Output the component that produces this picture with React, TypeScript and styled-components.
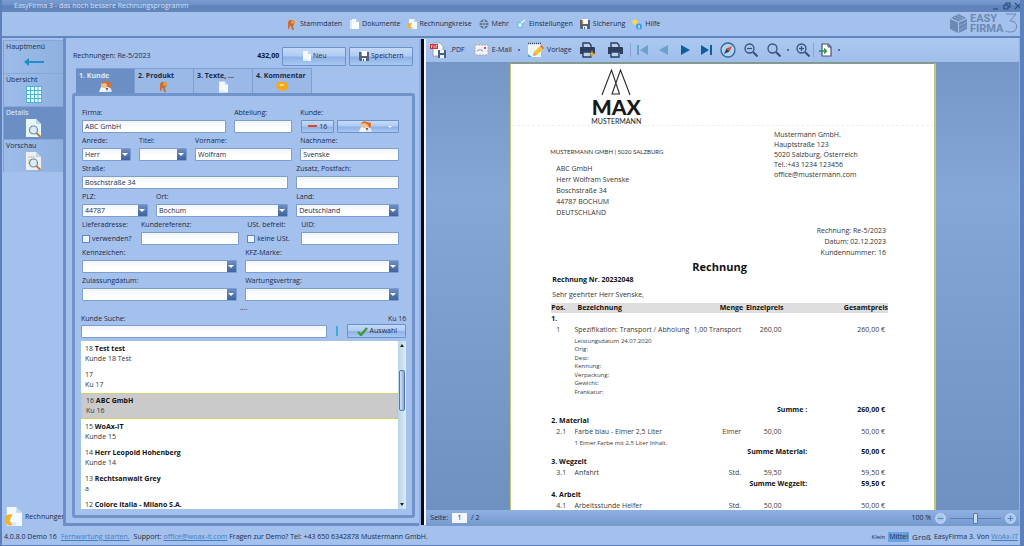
import React from "react";
import styled, { createGlobalStyle } from "styled-components";

const Global = createGlobalStyle`
  * { box-sizing: border-box; }
  html, body { margin: 0; padding: 0; }
  body, button, input, select {
    font-family: "Open Sans", "Noto Sans", sans-serif;
    font-size: 7px;
    line-height: 10px;
    color: #1b2a4a;
  }
  button { padding: 0; margin: 0; border: 0; background: none; cursor: pointer; }
  ul { list-style: none; margin: 0; padding: 0; }
  p, h1, h2 { margin: 0; }
  svg { display: block; flex: none; }
  a { color: #3f7fc4; }
`;

const Window = styled.div`
  display: flex;
  flex-direction: column;
  width: 100%;
  height: 100vh;
  min-height: 320px;
  overflow: hidden;
  background: #a3c1ec;
  border: solid #5b80ba;
  border-width: 0 4px 1px 2px;
`;

const TitleBar = styled.header`
  display: flex;
  align-items: center;
  justify-content: space-between;
  flex: none;
  height: 12px;
  padding: 0 2px 1px 14px;
  margin: 0 -4px 0 -2px;
  background: linear-gradient(#789cd2, #6f93ca 35%, #5f82b8 50%, #6285bc);
  color: #d3e2f8;
`;

const WindowButtons = styled.div`
  display: flex;
  gap: 3px;
`;

const MenuBar = styled.nav`
  display: flex;
  align-items: center;
  flex: none;
  height: 26px;
  padding: 0 2px 0 28%;
  border-bottom: 2px solid #6185bd;
`;

const MenuItem = styled.button`
  display: flex;
  align-items: center;
  gap: 3px;
  margin-right: 7px;
`;

const Brand = styled.div`
  margin-left: auto;
`;

const Body = styled.div`
  display: flex;
  flex: 1;
  min-height: 0;
`;

const SideNav = styled.aside`
  display: flex;
  flex-direction: column;
  flex: none;
  width: 61px;
  padding: 2px 0 0 1px;
`;

const SideTab = styled.button<{ $active?: boolean }>`
  display: flex;
  flex-direction: column;
  align-items: flex-start;
  height: 33px;
  padding: 1px 2px 0;
  border: 1px solid #7d9fd2;
  border-top-color: #86a7d8;
  border-width: 1px 0 0 1px;
  background: ${(p) => (p.$active ? "#6b8fc5" : "linear-gradient(90deg, #9dbce9, #8fb0e0)")};
  color: ${(p) => (p.$active ? "#e8f1ff" : "#1b2a4a")};
  & > svg { align-self: center; margin-top: 1px; }
`;

const SideFoot = styled.div`
  display: flex;
  align-items: center;
  gap: 3px;
  margin-top: auto;
  padding-left: 2px;
  white-space: nowrap;
  overflow: hidden;
`;

const Editor = styled.main`
  display: flex;
  flex-direction: column;
  flex: 0 0 35%;
  min-width: 0;
  padding: 6px 4px 5px 6px;
  border: solid #6a8ec5;
  border-width: 0 0 3px 3px;
`;

const EditorHead = styled.div`
  display: flex;
  align-items: center;
  flex: none;
  gap: 3px;
  height: 24px;
  padding: 0 2px 0 1px;
`;

const HeadTitle = styled.h1`
  flex: 1;
  font-size: 7px;
  font-weight: 400;
`;

const Amount = styled.strong`
  color: #0d1526;
`;

const PushButton = styled.button<{ $w: number; $h: number }>`
  display: flex;
  align-items: center;
  justify-content: center;
  gap: 2px;
  flex: 0 1 ${(p) => p.$w}px;
  height: ${(p) => p.$h}px;
  border: 1px solid #6c90cb;
  border-radius: 1px;
  background: linear-gradient(#c3d9f8, #b0ccf3 48%, #8db0e6 52%, #a9c7f2);
`;

const Tabs = styled.div`
  display: flex;
  flex: none;
  padding: 0 0 0 4px;
`;

const Tab = styled.button<{ $active?: boolean }>`
  display: flex;
  flex-direction: column;
  align-items: flex-start;
  width: 59px;
  height: 25px;
  padding: 2px 3px 0;
  border: 1px solid #7d9fd3;
  border-width: 1px 1px 0 0;
  font-weight: 700;
  background: ${(p) => (p.$active ? "#6b8fc5" : "#9ab9e7")};
  color: ${(p) => (p.$active ? "#dce9fb" : "#1b2a4a")};
  & > svg { align-self: center; }
`;

const Group = styled.section`
  display: flex;
  flex-direction: column;
  flex: 1;
  min-height: 0;
  padding: 12px 6px 6px;
  border: 3px solid #7094ca;
  border-radius: 3px;
`;

const Form = styled.form`
  display: flex;
  flex-direction: column;
  gap: 3px;
  padding: 0 7px 0 1px;
`;

const FormRow = styled.div<{ $cols: string }>`
  display: grid;
  grid-template-columns: ${(p) => p.$cols};
  column-gap: 8px;
`;

const FieldBox = styled.div`
  display: flex;
  flex-direction: column;
  gap: 2px;
  min-width: 0;
  white-space: nowrap;
`;

const TextInput = styled.input`
  width: 100%;
  min-width: 0;
  height: 13px;
  padding: 0 2px;
  border: 1px solid #7c9dd0;
  border-radius: 1px;
  outline: 0;
  background: linear-gradient(#f1f5fc, #fff 60%);
`;

const SearchInput = styled(TextInput)`
  flex: 1;
  width: auto;
`;

const SelectWrap = styled.span`
  position: relative;
  display: block;
  &::before {
    content: "";
    position: absolute;
    top: 1px;
    right: 1px;
    width: 9px;
    height: 11px;
    background: linear-gradient(#6b8dc4, #3f639f);
    pointer-events: none;
  }
  &::after {
    content: "";
    position: absolute;
    top: 5px;
    right: 3px;
    border: solid transparent;
    border-width: 3px 3px 0;
    border-top-color: #fff;
    pointer-events: none;
  }
`;

const SelectInput = styled.select`
  display: block;
  width: 100%;
  height: 13px;
  padding: 0 12px 0 2px;
  appearance: none;
  border: 1px solid #7c9dd0;
  border-radius: 1px;
  outline: 0;
  background: linear-gradient(#f1f5fc, #fff 60%);
`;

const CheckLabel = styled.label`
  display: flex;
  align-items: center;
  gap: 2px;
  height: 13px;
`;

const CheckBox = styled.input`
  appearance: none;
  flex: none;
  width: 8px;
  height: 8px;
  margin: 0;
  border: 1px solid #6286bf;
  background: #eef4fd;
`;

const ButtonPair = styled.div`
  display: flex;
  gap: 3px;
  padding-left: 1px;
`;

const DropMark = styled.i`
  margin-left: 14px;
  margin-right: -14px;
  border: solid transparent;
  border-width: 2px 2px 0;
  border-top-color: #e8f1ff;
`;

const Splitter = styled.div`
  flex: none;
  height: 13px;
  line-height: 14px;
  text-align: center;
`;

const SearchHead = styled.div`
  display: flex;
  justify-content: space-between;
`;

const SearchRow = styled.div`
  display: flex;
  align-items: center;
  flex: none;
  gap: 9px;
  height: 14px;
  margin-bottom: 3px;
`;

const SearchTick = styled.i`
  flex: none;
  width: 2px;
  height: 10px;
  background: #3fa9dc;
`;

const ListBox = styled.div`
  display: flex;
  flex: 1;
  min-height: 0;
  background: #fff;
`;

const List = styled.ul`
  flex: 1;
  overflow: hidden;
`;

const ListItem = styled.li<{ $active?: boolean }>`
  height: 26px;
  padding: ${(p) => (p.$active ? "2px 4px" : "3px 4px")};
  border: ${(p) => (p.$active ? "1px solid #d3cf6a" : "0")};
  background: ${(p) => (p.$active ? "#cbcaca" : "#fff")};
  color: #333;
  b { color: #111; }
`;

const ScrollBar = styled.div`
  display: flex;
  flex-direction: column;
  align-items: center;
  justify-content: space-between;
  flex: none;
  width: 8px;
  padding: 3px 0;
  background: linear-gradient(90deg, #b7d4ea, #dcebf5);
`;

const ScrollThumb = styled.span`
  width: 6px;
  height: 41px;
  margin: 23px 0 auto;
  border: 1px solid #5577aa;
  border-radius: 2px;
  background: linear-gradient(90deg, #d4e4f8, #88a9d8);
`;

const Divider = styled.div`
  flex: none;
  width: 7px;
  margin: 1px 0;
  background: linear-gradient(90deg, #8fb0e0 0 2px, #05080f 2px 5px, #f2f6fc 5px);
`;

const Viewer = styled.section`
  display: flex;
  flex-direction: column;
  flex: 1;
  min-width: 0;
  border-right: 1px solid #8fb1e3;
`;

const ToolBar = styled.div`
  display: flex;
  align-items: center;
  flex: none;
  height: 24px;
  background: linear-gradient(#abc8f0, #a0beea);
`;

const Tool = styled.button<{ $w: number }>`
  display: flex;
  align-items: center;
  justify-content: center;
  gap: 3px;
  flex: none;
  width: ${(p) => p.$w}px;
  height: 22px;
`;

const Dot = styled.i`
  width: 2px;
  height: 2px;
  margin-left: 3px;
  background: #52709f;
`;

const ToolSep = styled.span`
  flex: none;
  width: 1px;
  height: 14px;
  margin: 0 1px;
  background: #86a5d4;
`;

const Canvas = styled.div`
  display: flex;
  flex: 1;
  min-height: 0;
  padding: 1px 83px 0 84px;
  overflow: hidden;
  background: linear-gradient(#7596c6, #85a7d7 30%, #7b9dcd 60%, #6e91c1);
`;

const Paper = styled.article`
  flex: 1;
  min-width: 0;
  padding: 5px 46px 0 40px;
  border: 1px solid #c2cb74;
  border-top-color: #8fa05c;
  border-right-width: 2px;
  border-bottom: 0;
  background: #fff;
  color: #333;
`;

const PaperLogo = styled.div`
  display: flex;
  flex-direction: column;
  align-items: center;
  width: 130px;
`;

const LogoName = styled.strong`
  font-family: Lato, sans-serif;
  font-size: 21px;
  font-weight: 900;
  line-height: 21px;
  color: #1a1a1a;
`;

const LogoSub = styled.span`
  font-family: Lato, sans-serif;
  font-size: 7px;
  line-height: 8px;
  color: #222;
`;

const Fold = styled.hr`
  margin: 0 -46px 4px -39px;
  border: 0;
  border-top: 1px dashed #eceeef;
`;

const Addresses = styled.div`
  display: flex;
  justify-content: space-between;
`;

const Recipient = styled.address`
  padding: 33px 0 0 5px;
  font-style: normal;
  line-height: 11px;
  white-space: pre-line;
`;

const Sender = styled.address`
  width: 114px;
  font-style: normal;
  line-height: 10px;
  white-space: pre-line;
`;

const SenderLine = styled.p`
  margin: -17px 0 6px -6px;
  font-family: Lato, sans-serif;
  font-size: 6px;
`;

const Meta = styled.div`
  margin-top: 7px;
  padding-right: 2px;
  text-align: right;
  line-height: 11px;
`;

const DocTitle = styled.h2`
  margin-top: 1px;
  font-size: 11px;
  line-height: 16px;
  text-align: center;
  color: #111;
`;

const DocNumber = styled.p`
  padding-left: 1px;
  font-weight: 700;
  color: #111;
`;

const Greeting = styled.p`
  padding: 5px 0 3px 1px;
`;

const Items = styled.table`
  width: 100%;
  border-collapse: collapse;
  table-layout: fixed;
  td, th { padding: 0; text-align: left; vertical-align: middle; white-space: nowrap; }
  th { background: #dedede; color: #111; }
`;

const ItemRow = styled.tr<{ $h: number; $small?: boolean; $bold?: boolean }>`
  height: ${(p) => p.$h}px;
  font-size: ${(p) => (p.$small ? 6 : 7)}px;
  line-height: ${(p) => (p.$small ? 8 : 10)}px;
  font-weight: ${(p) => (p.$bold ? 700 : 400)};
  color: ${(p) => (p.$bold ? "#111" : "#3a3a3a")};
`;

const Cell = styled.td<{ $end?: number; $start?: number }>`
  && {
    text-align: ${(p) => (p.$end === undefined ? "left" : "right")};
    padding-right: ${(p) => p.$end ?? 0}px;
    padding-left: ${(p) => p.$start ?? 0}px;
  }
`;

const HeadCell = styled(Cell).attrs({ as: "th" })``;

const PageBar = styled.footer`
  display: flex;
  align-items: center;
  flex: none;
  gap: 4px;
  height: 16px;
  padding: 0 3px 0 4px;
  background: linear-gradient(#8fb0e3, #7598cd);
`;

const PageInput = styled.input`
  width: 15px;
  height: 10px;
  padding: 0;
  border: 0;
  text-align: center;
  background: #f4f8fe;
`;

const ZoomText = styled.span`
  margin-left: auto;
`;

const ZoomSlider = styled.input`
  appearance: none;
  width: 51px;
  height: 12px;
  margin: 0;
  background: linear-gradient(#5c7fb6, #5c7fb6) center / 100% 1px no-repeat;
  &::-webkit-slider-thumb {
    appearance: none;
    width: 5px;
    height: 11px;
    border: 1px solid #56779f;
    border-radius: 1px;
    background: #c9dcf6;
  }
`;

const StatusBar = styled.footer`
  display: flex;
  align-items: center;
  flex: none;
  gap: 4px;
  height: 19px;
  padding: 3px 2px 0;
  white-space: nowrap;
`;

const SizeButton = styled.button<{ $size: number; $active?: boolean }>`
  font-size: ${(p) => p.$size}px;
  padding: 0 1px;
  background: ${(p) => (p.$active ? "#69a3e0" : "none")};
`;

const StatusRight = styled.div`
  display: flex;
  align-items: center;
  gap: 2px;
  margin-left: auto;
`;

/* ---------- icons ---------- */

const PersonIcon = () => (
  <svg width="10" height="11" viewBox="0 0 10 11">
    <path d="M2 1h5l1 3-2 3 1 4H5L4 7 2 6z" fill="#b8732c" />
    <path d="M1 3l2-2 1 4-2 5H1z" fill="#d9652f" />
    <circle cx="6" cy="3" r="2" fill="#e0a040" />
  </svg>
);
const UsersIcon = () => (
  <svg width="13" height="11" viewBox="0 0 13 11">
    <path d="M0 11l2-5h4l2 5z" fill="#f4f8fc" />
    <path d="M6 11l1-5h4l2 4-1 1z" fill="#dfeaf4" />
    <circle cx="5" cy="4" r="3" fill="#f3c08c" />
    <path d="M2 3q2-4 6-2l4 1v4l-2 1-1-3-3-2z" fill="#e46a1e" />
    <path d="M7 7l1 3 1-3z" fill="#6a3a2c" />
  </svg>
);
const DocIcon = ({ w = 9, h = 10, coin = false }: { w?: number; h?: number; coin?: boolean }) => (
  <svg width={w} height={h} viewBox="0 0 9 10">
    <path d="M1 0h5l3 3v7H1z" fill="#f3f9ff" />
    <path d="M6 0l3 3H6z" fill="#b9d8f0" />
    <path d="M1 8h5v2H1z" fill="#d9ecfa" />
    {coin && <path d="M4 4a3 3 0 1 0 0 5.500L2.500 7z" fill="#f0b323" />}
  </svg>
);
const PagesIcon = () => (
  <svg width="10" height="11" viewBox="0 0 10 11">
    <path d="M1 1h4l2 2v7H1z" fill="#dcebfa" />
    <path d="M3 0h4l3 3v7H3z" fill="#f8fcff" />
    <path d="M7 0l3 3H7z" fill="#a9cdec" />
  </svg>
);
const GlobeIcon = () => (
  <svg width="10" height="10" viewBox="0 0 10 10">
    <circle cx="5" cy="5" r="4.500" fill="#5a7a9a" />
    <path d="M1 3.500h8M1 6.500h8M5 1q-3 4 0 8M5 1q3 4 0 8" stroke="#b4cce0" strokeWidth=".7" fill="none" />
  </svg>
);
const GearIcon = () => (
  <svg width="10" height="10" viewBox="0 0 10 10">
    <circle cx="4" cy="6" r="3" fill="#a9dcf5" stroke="#6ab8e6" />
    <circle cx="4" cy="6" r="1" fill="#fff" />
    <path d="M5 4l4-3" stroke="#e8f5fd" strokeWidth="1.500" />
  </svg>
);
const FloppyIcon = () => (
  <svg width="10" height="10" viewBox="0 0 10 10">
    <path d="M0 1h10v9H1L0 9z" fill="#56617a" />
    <path d="M2 0h6v5H2z" fill="#fff" />
    <path d="M2 1h1v4H2z" fill="#e28a4a" />
    <path d="M3 7h4v3H3z" fill="#e8edf5" />
    <path d="M4 8h1v2H4z" fill="#56617a" />
  </svg>
);
const HelpIcon = () => (
  <svg width="10" height="11" viewBox="0 0 10 11">
    <circle cx="3" cy="3" r="2.600" fill="#ffd84a" />
    <circle cx="7" cy="7.500" r="3" fill="#36a0e6" />
    <path d="M7 6v3.500" stroke="#fff" />
  </svg>
);
const ArrowLeftIcon = () => (
  <svg width="20" height="18" viewBox="0 0 20 18">
    <path d="M0 9l5-4v3h15v2H5v3z" fill="#1d8fcd" />
  </svg>
);
const GridIcon = () => (
  <svg width="16" height="17" viewBox="0 0 16 17">
    <path d="M0 0h16v17H0z" fill="#e9fbff" />
    <path d="M0 .5h16M0 4.500h16M0 8.500h16M0 12.500h16M0 16.500h16M.5 0v17M4.500 0v17M8.500 0v17M12 0v17M15.500 0v17" stroke="#4bb4dc" />
  </svg>
);
const PreviewIcon = ({ lines = false }: { lines?: boolean }) => (
  <svg width="17" height="19" viewBox="0 0 17 19">
    <path d="M1 0h10l5 5v13H1z" fill={lines ? "#eef0f0" : "#e6f7fe"} />
    <path d="M11 0l5 5h-5z" fill="#b8d6ea" />
    {lines && <path d="M3 5h7M3 8h8M3 11h5" stroke="#b9bcc0" />}
    <circle cx="8.500" cy="11" r="4" fill="#d8ecf8" stroke="#7b8796" strokeWidth="1.200" />
    <path d="M11.500 14l4 4" stroke="#c07a3c" strokeWidth="2" />
  </svg>
);
const ChatIcon = () => (
  <svg width="12" height="11" viewBox="0 0 12 11">
    <path d="M2 1h8l2 2v5l-2 1H8l-2 2-1-2-4-1-1-3z" fill="#f5a81c" />
    <path d="M3 3h5v2H4z" fill="#ffd36b" />
  </svg>
);
const MinusIcon = () => (
  <svg width="9" height="3" viewBox="0 0 9 3">
    <path d="M0 0h9v2H0z" fill="#e0452c" />
  </svg>
);
const CheckIcon = () => (
  <svg width="11" height="9" viewBox="0 0 11 9">
    <path d="M1 5l3 3 6-7" stroke="#3d9b35" strokeWidth="2.400" fill="none" />
  </svg>
);
const PdfIcon = () => (
  <svg width="17" height="16" viewBox="0 0 17 16">
    <path d="M3 1h7l3 3v10H3z" fill="#fff" stroke="#8a94a6" strokeWidth=".8" />
    <path d="M0 2h8v5H0z" fill="#cc3340" />
    <path d="M1.500 6V3.500h1M4 3.500V6M6 6V3.500h1.200" stroke="#fff" strokeWidth=".7" fill="none" />
    <path d="M8 8h8v8H8z" fill="#44608a" />
    <path d="M10 8h4v3h-4zM10 13h4v3h-4z" fill="#eef3fa" />
  </svg>
);
const MailIcon = () => (
  <svg width="15" height="12" viewBox="0 0 15 12">
    <path d="M1 1h13v10H1z" fill="#f5f3f4" stroke="#a9a3b4" strokeDasharray="2 1" />
    <path d="M3 7q3-3 6 0" stroke="#7a94c8" fill="none" />
    <path d="M10 3h2v2h-2z" fill="#d8484e" />
  </svg>
);
const NoteIcon = () => (
  <svg width="17" height="17" viewBox="0 0 17 17">
    <path d="M1 2h13v13H1z" fill="#eef6f6" />
    <path d="M1 1.500h13" stroke="#35445c" strokeWidth="1.500" strokeDasharray="1 1" />
    <path d="M1 12l4 3H1z" fill="#4aa6d8" />
    <path d="M6 14l1-4 6-6 3 3-6 6z" fill="#f6c22e" />
    <path d="M13 4l1-1 3 3-1 1z" fill="#e05a50" />
    <path d="M6 14l1-4 3 3z" fill="#e9a36a" />
  </svg>
);
const PrinterIcon = ({ quick = false }: { quick?: boolean }) => (
  <svg width="17" height="16" viewBox="0 0 17 16">
    <path d="M4 5V1h6l2 2v2" fill="#b8cfee" stroke="#2c3f5c" strokeWidth="1.400" />
    <path d="M1 5h14q1 0 1 1v6h-3v-2H4v2H1z" fill="#2c3f5c" />
    <path d="M4 10h8v5H4z" fill="#b8cfee" stroke="#2c3f5c" strokeWidth="1.400" />
    {quick && <path d="M13 8l1 3 3 1-3 1-1 3-1-3-3-1 3-1z" fill="#d6a93a" />}
  </svg>
);
const StepIcon = ({ bar, back }: { bar?: boolean; back?: boolean }) => (
  <svg width="12" height="12" viewBox="0 0 12 12">
    <path
      d={bar ? "M0 1l8 5-8 5zM9 1h2v10H9z" : "M1 1l9 5-9 5z"}
      transform={back ? "matrix(-1 0 0 1 12 0)" : undefined}
      fill={back ? "#6ba2cc" : "#0f5f9f"}
    />
  </svg>
);
const CompassIcon = () => (
  <svg width="16" height="16" viewBox="0 0 16 16">
    <circle cx="8" cy="8" r="7" fill="#b4d2f0" stroke="#2d6a96" strokeWidth="1.300" />
    <path d="M12 4L9.500 9.500l-3-3z" fill="#e04a3a" />
    <path d="M4 12l2.500-5.500 3 3z" fill="#26425f" />
  </svg>
);
const LensIcon = ({ sign }: { sign?: "+" | "-" }) => (
  <svg width="14" height="14" viewBox="0 0 14 14" fill="none" stroke="#3a5078">
    <circle cx="5.500" cy="5.500" r="4.500" strokeWidth="1.300" />
    <path d="M9 9l4.500 4.500" strokeWidth="2" />
    {sign && <path d="M3 5.500h5" strokeWidth="1.200" />}
    {sign === "+" && <path d="M5.500 3v5" strokeWidth="1.200" />}
  </svg>
);
const ExportIcon = () => (
  <svg width="13" height="14" viewBox="0 0 13 14">
    <path d="M3 1h6l3 3v9H3z" fill="#fff" stroke="#44546e" strokeWidth="1.200" />
    <path d="M9 1v3h3" fill="none" stroke="#44546e" />
    <path d="M0 8h7M5 5.500L7.500 8 5 10.500" stroke="#2e8b45" strokeWidth="1.300" fill="none" />
  </svg>
);
const RoundIcon = ({ plus }: { plus?: boolean }) => (
  <svg width="11" height="11" viewBox="0 0 10 10" fill="none">
    <circle cx="5" cy="5" r="4.400" fill="#a9c6ef" stroke="#dce9fb" strokeWidth=".7" />
    <path d={plus ? "M2.500 5h5M5 2.500v5" : "M2.500 5h5"} stroke="#5f83ba" />
  </svg>
);
const WinIcon = ({ d }: { d: string }) => (
  <svg width="8" height="8" viewBox="0 0 8 8">
    <path d={d} stroke="#2e4a7c" strokeWidth="1.200" fill="none" />
  </svg>
);
const BrandLogo = () => (
  <svg width="68" height="22" viewBox="0 0 68 22" fill="#6d88b3">
    <path d="M0 6l8 3.500V20L0 16zM9 9.500L17 6v10l-8 4zM1 5l7.500-4L16 5 8.500 8.500z" />
    <path d="M3 3.500l8 3.500M6 2l8 4M9 13l8-4M9 17l8-4" stroke="#8ea9d4" strokeWidth=".8" />
    <g fontFamily="Roboto, sans-serif" fontWeight="700" fontSize="11">
      <text x="20" y="9">EASY</text>
      <text x="20" y="19">FIRMA</text>
    </g>
    <path d="M56 1h10l-6 7q7 0 6.500 6-.5 5-6 5-3 0-5-1" fill="none" stroke="#6d88b3" />
  </svg>
);
const PeaksLogo = () => (
  <svg width="30" height="27" viewBox="0 0 30 27" fill="none" stroke="#2a2a2a" strokeWidth="1.100">
    <path d="M1 26L10.500 1l8 24h-7.500L19.500 1 29 26" />
  </svg>
);

/* ---------- form helpers ---------- */

type FieldProps = { id: string; label: string; value?: string; select?: boolean };

const Field = ({ id, label, value = "", select }: FieldProps) => (
  <FieldBox>
    <label htmlFor={id}>{label}</label>
    {select ? (
      <SelectWrap>
        <SelectInput id={id} defaultValue={value}>
          <option value={value}>{value}</option>
        </SelectInput>
      </SelectWrap>
    ) : (
      <TextInput id={id} defaultValue={value} />
    )}
  </FieldBox>
);

const Check = ({ title, label }: { title: string; label: string }) => (
  <FieldBox>
    <span>{title}</span>
    <CheckLabel>
      <CheckBox type="checkbox" />
      {label}
    </CheckLabel>
  </FieldBox>
);

const fr = (...n: number[]) => n.map((v) => `minmax(0, ${v}fr)`).join(" ");

const menu: [string, React.ReactNode][] = [
  ["Stammdaten", <PersonIcon />],
  ["Dokumente", <PagesIcon />],
  ["Rechnungkreise", <DocIcon coin />],
  ["Mehr", <GlobeIcon />],
  ["Einstellungen", <GearIcon />],
  ["Sicherung", <FloppyIcon />],
  ["Hilfe", <HelpIcon />],
];

const customers: [string, string, string][] = [
  ["18", "Test test", "Kunde 18 Test"],
  ["17", "", "Ku 17"],
  ["16", "ABC GmbH", "Ku 16"],
  ["15", "WoAx-IT", "Kunde 15"],
  ["14", "Herr Leopold Hohenberg", "Kunde 14"],
  ["13", "Rechtsanwalt Grey", "a"],
  ["12", "Colore Italia - Milano S.A.", ""],
];

const Position = ({ pos, name, unit, price, total, h }: { pos: string; name: string; unit: string; price: string; total: string; h: number }) => (
  <ItemRow $h={h}>
    <Cell $start={5}>{pos}</Cell>
    <Cell $start={3}>{name}</Cell>
    <Cell $end={2}>{unit}</Cell>
    <Cell $end={2}>{price}</Cell>
    <td />
    <Cell $end={3}>{total}</Cell>
  </ItemRow>
);

const Note = ({ text, h = 9 }: { text: string; h?: number }) => (
  <ItemRow $h={h} $small>
    <td />
    <Cell $start={3} colSpan={5}>{text}</Cell>
  </ItemRow>
);

const Sum = ({ label, total, h }: { label: string; total: string; h: number }) => (
  <ItemRow $h={h} $bold>
    <Cell colSpan={5} $end={0}>{label}</Cell>
    <Cell $end={3}>{total}</Cell>
  </ItemRow>
);

const Section = ({ label, h }: { label: string; h: number }) => (
  <ItemRow $h={h} $bold>
    <Cell colSpan={6}>{label}</Cell>
  </ItemRow>
);

export default function App() {
  return (
    <Window>
      <Global />
      <TitleBar>
        <span>EasyFirma 3 - das noch bessere Rechnungsprogramm</span>
        <WindowButtons>
          <button aria-label="Minimieren"><WinIcon d="M1 7h5" /></button>
          <button aria-label="Verkleinern"><WinIcon d="M1 3h4v4H1zM3 3V1h4v4H5" /></button>
          <button aria-label="Schließen"><WinIcon d="M1 1l6 6M7 1L1 7" /></button>
        </WindowButtons>
      </TitleBar>
      <MenuBar>
        {menu.map(([label, icon]) => (
          <MenuItem key={label}>{icon}{label}</MenuItem>
        ))}
        <Brand><BrandLogo /></Brand>
      </MenuBar>
      <Body>
        <SideNav>
          <SideTab>Hauptmenü<ArrowLeftIcon /></SideTab>
          <SideTab>Übersicht<GridIcon /></SideTab>
          <SideTab $active>Details<PreviewIcon /></SideTab>
          <SideTab>Vorschau<PreviewIcon lines /></SideTab>
          <SideFoot><DocIcon w={17} h={19} coin />Rechnungen</SideFoot>
        </SideNav>
        <Editor>
          <EditorHead>
            <HeadTitle>Rechnungen: Re-5/2023</HeadTitle>
            <Amount>432,00</Amount>
            <PushButton $w={64} $h={19}><DocIcon />Neu</PushButton>
            <PushButton $w={64} $h={19}><FloppyIcon />Speichern</PushButton>
          </EditorHead>
          <Tabs>
            <Tab $active>1. Kunde<UsersIcon /></Tab>
            <Tab>2. Produkt<PersonIcon /></Tab>
            <Tab>3. Texte, ...<DocIcon w={10} h={12} /></Tab>
            <Tab>4. Kommentar<ChatIcon /></Tab>
          </Tabs>
          <Group>
            <Form>
              <FormRow $cols={fr(144, 58, 99)}>
                <Field id="firma" label="Firma:" value="ABC GmbH" />
                <Field id="abteilung" label="Abteilung:" />
                <FieldBox>
                  <span>Kunde:</span>
                  <ButtonPair>
                    <PushButton type="button" $w={33} $h={13}><MinusIcon />16</PushButton>
                    <PushButton type="button" $w={62} $h={13} aria-label="Kunde wählen"><UsersIcon /><DropMark /></PushButton>
                  </ButtonPair>
                </FieldBox>
              </FormRow>
              <FormRow $cols={fr(49, 48, 97, 99)}>
                <Field id="anrede" label="Anrede:" value="Herr" select />
                <Field id="titel" label="Titel:" select />
                <Field id="vorname" label="Vorname:" value="Wolfram" />
                <Field id="nachname" label="Nachname:" value="Svenske" />
              </FormRow>
              <FormRow $cols={fr(206, 103)}>
                <Field id="strasse" label="Straße:" value="Boschstraße 34" />
                <Field id="zusatz" label="Zusatz, Postfach:" />
              </FormRow>
              <FormRow $cols={fr(66, 132, 103)}>
                <Field id="plz" label="PLZ:" value="44787" select />
                <Field id="ort" label="Ort:" value="Bochum" select />
                <Field id="land" label="Land:" value="Deutschland" select />
              </FormRow>
              <FormRow $cols={fr(51, 98, 46, 98)}>
                <Check title="Lieferadresse:" label="verwenden?" />
                <Field id="referenz" label="Kundereferenz:" />
                <Check title="USt. befreit:" label="keine USt." />
                <Field id="uid" label="UID:" />
              </FormRow>
              <FormRow $cols={fr(155, 154)}>
                <Field id="kennzeichen" label="Kennzeichen:" select />
                <Field id="marke" label="KFZ-Marke:" select />
              </FormRow>
              <FormRow $cols={fr(155, 154)}>
                <Field id="zulassung" label="Zulassungdatum:" select />
                <Field id="wartung" label="Wartungsvertrag:" select />
              </FormRow>
            </Form>
            <Splitter>....</Splitter>
            <SearchHead>
              <label htmlFor="suche">Kunde Suche:</label>
              <span>Ku 16</span>
            </SearchHead>
            <SearchRow>
              <SearchInput id="suche" />
              <SearchTick />
              <PushButton $w={59} $h={14}><CheckIcon />Auswahl</PushButton>
            </SearchRow>
            <ListBox>
              <List>
                {customers.map(([nr, name, info]) => (
                  <ListItem key={nr} $active={nr === "16"}>
                    <div>{nr} <b>{name}</b></div>
                    <div>{info}</div>
                  </ListItem>
                ))}
              </List>
              <ScrollBar>
                <svg width="4" height="3" viewBox="0 0 4 3"><path d="M2 0l2 3H0z" fill="#222" /></svg>
                <ScrollThumb />
                <svg width="4" height="3" viewBox="0 0 4 3"><path d="M0 0h4L2 3z" fill="#222" /></svg>
              </ScrollBar>
            </ListBox>
          </Group>
        </Editor>
        <Divider />
        <Viewer>
          <ToolBar>
            <Tool $w={42}><PdfIcon />.PDF</Tool>
            <Tool $w={57}><MailIcon />E-Mail<Dot /></Tool>
            <Tool $w={48}><NoteIcon />Vorlage</Tool>
            <Tool $w={29} aria-label="Schnelldruck"><PrinterIcon quick /></Tool>
            <Tool $w={27} aria-label="Drucken"><PrinterIcon /></Tool>
            <ToolSep />
            <Tool $w={20} aria-label="Erste Seite"><StepIcon bar back /></Tool>
            <Tool $w={22} aria-label="Vorige Seite"><StepIcon back /></Tool>
            <Tool $w={24} aria-label="Nächste Seite"><StepIcon /></Tool>
            <Tool $w={18} aria-label="Letzte Seite"><StepIcon bar /></Tool>
            <Tool $w={24} aria-label="Navigation"><CompassIcon /></Tool>
            <Tool $w={22} aria-label="Verkleinern"><LensIcon sign="-" /></Tool>
            <Tool $w={31} aria-label="Zoom"><LensIcon /><Dot /></Tool>
            <Tool $w={19} aria-label="Vergrößern"><LensIcon sign="+" /></Tool>
            <ToolSep />
            <Tool $w={29} aria-label="Exportieren"><ExportIcon /><Dot /></Tool>
          </ToolBar>
          <Canvas>
            <Paper>
              <PaperLogo>
                <PeaksLogo />
                <LogoName>MAX</LogoName>
                <LogoSub>MUSTERMANN</LogoSub>
              </PaperLogo>
              <Fold />
              <Addresses>
                <Recipient>
                  <SenderLine>MUSTERMANN GMBH | 5020 SALZBURG</SenderLine>
                  {"ABC GmbH\nHerr Wolfram Svenske\nBoschstraße 34\n44787 BOCHUM\nDEUTSCHLAND"}
                </Recipient>
                <Sender>
                  {"Mustermann GmbH.\nHauptstraße 123\n5020 Salzburg, Österreich\nTel.:+43 1234 123456\noffice@mustermann.com"}
                </Sender>
              </Addresses>
              <Meta>
                <p>Rechnung: Re-5/2023</p>
                <p>Datum: 02.12.2023</p>
                <p>Kundennummer: 16</p>
              </Meta>
              <DocTitle>Rechnung</DocTitle>
              <DocNumber>Rechnung Nr. 20232048</DocNumber>
              <Greeting>Sehr geehrter Herr Svenske,</Greeting>
              <Items>
                <colgroup>
                  <col width="6%" />
                  <col width="36%" />
                  <col width="15%" />
                  <col width="12%" />
                  <col width="7%" />
                  <col width="24%" />
                </colgroup>
                <thead>
                  <ItemRow $h={10} $bold>
                    <HeadCell>Pos.</HeadCell>
                    <HeadCell $start={6}>Bezeichnung</HeadCell>
                    <HeadCell $end={0}>Menge</HeadCell>
                    <HeadCell $end={0}>Einzelpreis</HeadCell>
                    <HeadCell />
                    <HeadCell $end={0}>Gesamtpreis</HeadCell>
                  </ItemRow>
                </thead>
                <tbody>
                  <Section label="1." h={11} />
                  <Position pos="1" name="Spezifikation: Transport / Abholung" unit="1,00 Transport" price="260,00" total="260,00 €" h={12} />
                  <Note text="Leistungsdatum 24.07.2020" />
                  <Note text="Orig:" h={8} />
                  <Note text="Dest:" />
                  <Note text="Kennung:" h={8} />
                  <Note text="Verpackung:" />
                  <Note text="Gewicht:" h={8} />
                  <Note text="Frankatur:" />
                  <ItemRow $h={8}><td colSpan={6} /></ItemRow>
                  <Sum label="Summe :" total="260,00 €" h={12} />
                  <Section label="2. Material" h={10} />
                  <Position pos="2.1" name="Farbe blau - Eimer 2,5 Liter" unit="Eimer" price="50,00" total="50,00 €" h={12} />
                  <Note text="1 Eimer Farbe mit 2,5 Liter Inhalt." />
                  <Sum label="Summe Material:" total="50,00 €" h={10} />
                  <Section label="3. Wegzeit" h={10} />
                  <Position pos="3.1" name="Anfahrt" unit="Std." price="59,50" total="59,50 €" h={12} />
                  <Sum label="Summe Wegzeit:" total="59,50 €" h={10} />
                  <Section label="4. Arbeit" h={12} />
                  <Position pos="4.1" name="Arbeitsstunde Helfer" unit="Std." price="50,00" total="50,00 €" h={10} />
                </tbody>
              </Items>
            </Paper>
          </Canvas>
          <PageBar>
            <label htmlFor="seite">Seite:</label>
            <PageInput id="seite" defaultValue="1" />
            <span>/ 2</span>
            <ZoomText>100 %</ZoomText>
            <button aria-label="Kleiner"><RoundIcon /></button>
            <ZoomSlider type="range" aria-label="Zoom" defaultValue={50} />
            <button aria-label="Größer"><RoundIcon plus /></button>
          </PageBar>
        </Viewer>
      </Body>
      <StatusBar>
        <span>4.0.8.0 Demo 16</span>
        <a href="#fernwartung">Fernwartung starten.</a>
        <span>Support: <a href="mailto:office@woax-it.com">office@woax-it.com</a> Fragen zur Demo? Tel: +43 650 6342878 Mustermann GmbH.</span>
        <StatusRight>
          <SizeButton $size={6}>Klein</SizeButton>
          <SizeButton $size={7} $active>Mittel</SizeButton>
          <SizeButton $size={8}>Groß</SizeButton>
          <span>EasyFirma 3. Von <a href="#woax">WoAx-IT</a></span>
        </StatusRight>
      </StatusBar>
    </Window>
  );
}
